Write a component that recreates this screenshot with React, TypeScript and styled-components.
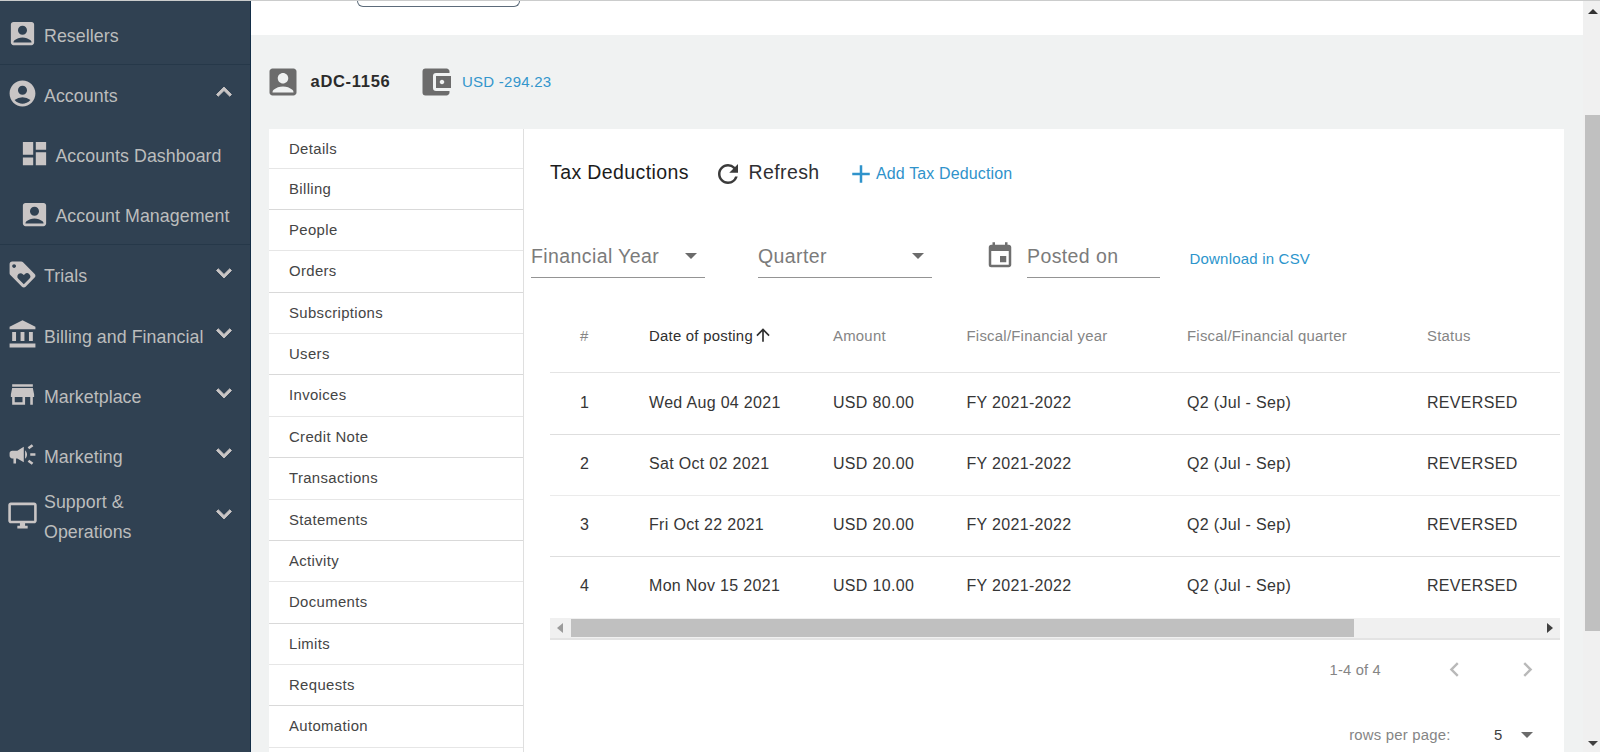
import React from 'react';
import styled, { createGlobalStyle } from 'styled-components';
import {
  MdAccountBalance,
  MdAccountBalanceWallet,
  MdAccountBox,
  MdAccountCircle,
  MdAdd,
  MdArrowUpward,
  MdCampaign,
  MdChevronLeft,
  MdChevronRight,
  MdDashboard,
  MdEvent,
  MdExpandLess,
  MdExpandMore,
  MdLoyalty,
  MdOutlineDesktopWindows,
  MdRefresh,
  MdStore,
} from 'react-icons/md';

const menus = [
  { label: 'Resellers', icon: MdAccountBox, divider: true },
  { label: 'Accounts', icon: MdAccountCircle, toggle: 'up' },
  { label: 'Accounts Dashboard', icon: MdDashboard, sub: true },
  { label: 'Account Management', icon: MdAccountBox, sub: true, divider: true },
  { label: 'Trials', icon: MdLoyalty, toggle: 'down' },
  { label: 'Billing and Financial', icon: MdAccountBalance, toggle: 'down' },
  { label: 'Marketplace', icon: MdStore, toggle: 'down' },
  { label: 'Marketing', icon: MdCampaign, toggle: 'down' },
  { label: 'Support & Operations', icon: MdOutlineDesktopWindows, toggle: 'down' },
];

const tabs = [
  'Details',
  'Billing',
  'People',
  'Orders',
  'Subscriptions',
  'Users',
  'Invoices',
  'Credit Note',
  'Transactions',
  'Statements',
  'Activity',
  'Documents',
  'Limits',
  'Requests',
  'Automation',
];

const deductions = [
  { id: 1, date: 'Wed Aug 04 2021', amount: 'USD 80.00' },
  { id: 2, date: 'Sat Oct 02 2021', amount: 'USD 20.00' },
  { id: 3, date: 'Fri Oct 22 2021', amount: 'USD 20.00' },
  { id: 4, date: 'Mon Nov 15 2021', amount: 'USD 10.00' },
];

export default function App() {
  return (
    <>
      <GlobalStyle />
      <Page>
        <Sidebar>
          {menus.map(({ label, icon: Icon, sub, toggle, divider }) => (
            <MenuItem key={label} $sub={sub} $divider={divider}>
              <Icon size={31} />
              <MenuLabel>{label}</MenuLabel>
              {toggle && (
                <Toggle>
                  {toggle === 'up' ? <MdExpandLess size={30} /> : <MdExpandMore size={30} />}
                </Toggle>
              )}
            </MenuItem>
          ))}
        </Sidebar>

        <Content>
          <TopBar>
            <SearchBox />
          </TopBar>
          <AccountBar>
            <MdAccountBox size={36} />
            <AccountName>aDC-1156</AccountName>
            <MdAccountBalanceWallet size={36} />
            <Balance>USD -294.23</Balance>
          </AccountBar>

          <Panel>
            <TabList>
              {tabs.map((tab) => (
                <Tab key={tab}>{tab}</Tab>
              ))}
            </TabList>

            <Detail>
              <TitleRow>
                <Title>Tax Deductions</Title>
                <RefreshButton>
                  <MdRefresh size={30} />
                  <span>Refresh</span>
                </RefreshButton>
                <AddButton>
                  <MdAdd size={30} />
                  <span>Add Tax Deduction</span>
                </AddButton>
              </TitleRow>

              <FilterRow>
                <Select>
                  Financial Year
                  <Caret />
                </Select>
                <Select>
                  Quarter
                  <Caret />
                </Select>
                <MdEvent size={30} />
                <DateField>Posted on</DateField>
                <Download>Download in CSV</Download>
              </FilterRow>

              <Table>
                <HeadRow>
                  <span>#</span>
                  <Sorted>
                    Date of posting
                    <MdArrowUpward size={20} />
                  </Sorted>
                  <span>Amount</span>
                  <span>Fiscal/Financial year</span>
                  <span>Fiscal/Financial quarter</span>
                  <span>Status</span>
                </HeadRow>
                {deductions.map(({ id, date, amount }) => (
                  <Row key={id}>
                    <span>{id}</span>
                    <span>{date}</span>
                    <span>{amount}</span>
                    <span>FY 2021-2022</span>
                    <span>Q2 (Jul - Sep)</span>
                    <span>REVERSED</span>
                  </Row>
                ))}
                <ScrollX>
                  <ArrowLeft />
                  <ThumbX />
                  <ArrowRight />
                </ScrollX>
              </Table>

              <Pager>
                <PageRange>1-4 of 4</PageRange>
                <MdChevronLeft size={29} />
                <MdChevronRight size={29} />
              </Pager>
              <PageSize>
                rows per page:
                <Size>5</Size>
                <Caret />
              </PageSize>
            </Detail>
          </Panel>
        </Content>

        <ScrollY>
          <ArrowUp />
          <ThumbY />
          <ArrowDown />
        </ScrollY>
      </Page>
    </>
  );
}

const GlobalStyle = createGlobalStyle`
  * {
    box-sizing: border-box;
  }

  body {
    margin: 0;
    overflow: hidden;
    font-family: 'Liberation Sans', Arial, sans-serif;
  }

  svg {
    flex-shrink: 0;
  }
`;

const Page = styled.div`
  display: grid;
  grid-template-columns: 251px 1fr 17px;
  height: 752px;
  overflow: hidden;
  border-top: 1px solid #cbcccc;
  background: #f0f2f2;
`;

const Sidebar = styled.nav`
  padding-top: 3.5px;
  background: #304152;
  border-right: 1px solid #142e47;
`;

const MenuItem = styled.div<{ $sub?: boolean; $divider?: boolean }>`
  display: flex;
  align-items: center;
  height: 60.2px;
  padding: 0 11px 0 ${({ $sub }) => ($sub ? 18.7 : 7.3)}px;
  border-bottom: 1px solid ${({ $divider }) => ($divider ? '#263849' : 'transparent')};
  color: #c9c5c5;

  > svg {
    margin-bottom: 1px;
  }
`;

const MenuLabel = styled.span`
  flex: 1;
  padding-top: 3px;
  margin-left: 5.7px;
  font-size: 17.8px;
  line-height: 30px;
  letter-spacing: 0.06px;
  color: #bcbdbd;
`;

const Toggle = styled.span`
  display: flex;
  margin-bottom: 4px;

  path:last-child {
    stroke: currentColor;
    stroke-width: 0.7px;
  }
`;

const Content = styled.main`
  min-width: 0;
  height: 751px;
  overflow: hidden;
`;

const TopBar = styled.div`
  height: 34px;
  padding-left: 106px;
  background: #fff;
`;

const SearchBox = styled.div`
  width: 163px;
  height: 6px;
  border: 1px solid #5c6b7a;
  border-top: 0;
  border-radius: 0 0 6px 6px;
`;

const AccountBar = styled.div`
  display: flex;
  align-items: center;
  height: 93.6px;
  padding-left: 13.5px;
  color: #6c6c6c;
`;

const AccountName = styled.strong`
  width: 117px;
  padding-left: 10px;
  font-size: 16.5px;
  letter-spacing: 0.7px;
  color: #2b2b2b;
`;

const Balance = styled.span`
  margin-left: 8.5px;
  font-size: 15px;
  letter-spacing: 0.25px;
  color: #3396cc;
`;

const Panel = styled.section`
  display: flex;
  width: 1295px;
  height: 640px;
  margin-left: 18px;
  background: #fff;
`;

const TabList = styled.ul`
  width: 255px;
  margin: 0;
  padding: 0;
  border-right: 1px solid #dfdfdf;
  list-style: none;
`;

const Tab = styled.li`
  height: 41.36px;
  padding-left: 20px;
  border-bottom: 1px solid #e6e6e6;
  font-size: 14.9px;
  line-height: 41.8px;
  letter-spacing: 0.36px;
  color: #454545;

  &:first-child {
    height: 40.1px;
    line-height: 40.6px;
  }

  &:nth-child(even) {
    border-color: #d9d9d9;
  }
`;

const Detail = styled.div`
  flex: 1;
  min-width: 0;
`;

const TitleRow = styled.div`
  display: flex;
  align-items: center;
  height: 30px;
  margin: 30.4px 0 0 26px;
`;

const Title = styled.h1`
  width: 162.5px;
  margin: -4px 0 0;
  font-size: 19.5px;
  font-weight: normal;
  line-height: 26px;
  letter-spacing: 0.4px;
  color: #1c1c1c;
`;

const RefreshButton = styled.div`
  display: flex;
  align-items: center;
  width: 133.5px;
  height: 30px;
  font-size: 19.5px;
  letter-spacing: 0.4px;
  color: #2f2f33;

  svg {
    color: #3b3b3b;
  }

  span {
    margin: -2px 0 0 6px;
  }
`;

const AddButton = styled.div`
  display: flex;
  align-items: center;
  font-size: 16px;
  letter-spacing: 0.13px;
  color: #2f93cb;

  span {
    padding-top: 1px;
  }
`;

const FilterRow = styled.div`
  display: flex;
  align-items: flex-start;
  height: 50px;
  margin: 52.4px 0 0 7px;
  color: #6f6f6f;

  > svg {
    margin: 0 12px 0 0;
  }
`;

const Field = styled.div`
  height: 37px;
  border-bottom: 1px solid #949494;
  font-size: 19.5px;
  line-height: 30px;
  letter-spacing: 0.4px;
  color: #7b7b7b;
`;

const Select = styled(Field)`
  display: flex;
  align-items: center;
  justify-content: space-between;
  width: 174px;
  margin-right: 53px;
  padding: 0 8.5px 6px 0;
`;

const Caret = styled.i`
  border: 6px solid transparent;
  border-top-color: #6b6b6b;
  border-bottom: 0;
`;

const DateField = styled(Field)`
  width: 133px;
`;

const Download = styled.span`
  margin-left: 29.5px;
  font-size: 15px;
  line-height: 35px;
  letter-spacing: 0.2px;
  color: #2c95cc;
`;

const Table = styled.div`
  width: 1010px;
  margin: 11px 0 0 26px;
`;

const Row = styled.div`
  display: grid;
  grid-template-columns: 69px 184px 133.5px 220.5px 240px 1fr;
  align-items: center;
  height: 61.3px;
  padding: 0 0 2px 30px;
  border-bottom: 1px solid #dedede;
  font-size: 16px;
  letter-spacing: 0.32px;
  color: #363636;
  white-space: nowrap;

  &:nth-child(4n + 3) {
    border-color: #ebebeb;
  }

  &:nth-child(5) {
    height: 60.3px;
    border: 0;
  }
`;

const HeadRow = styled(Row)`
  height: 71px;
  font-size: 14.9px;
  letter-spacing: 0.25px;
  border-color: #e4e4e4;
  color: #858585;
`;

const Sorted = styled.span`
  display: flex;
  align-items: center;
  color: #2f2f2f;

  svg {
    margin-bottom: 3px;
  }
`;

const ScrollX = styled.div`
  display: flex;
  align-items: center;
  height: 22px;
  border-bottom: 2px solid #e3e3e3;
  background: #f0f0f0;
`;

const ThumbX = styled.div`
  width: 783px;
  height: 18px;
  background: #c0c0c0;
`;

const ArrowLeft = styled.i`
  margin: 0 8px 0 7px;
  border: 5px solid transparent;
  border-left: 0;
  border-right: 6px solid #9b9b9b;
`;

const ArrowRight = styled.i`
  margin: 0 7px 0 auto;
  border: 5px solid transparent;
  border-right: 0;
  border-left: 6px solid #404040;
`;

const Pager = styled.div`
  display: flex;
  align-items: center;
  justify-content: flex-end;
  gap: 44.5px;
  height: 60px;
  padding-right: 22px;
  color: #b9b9b9;
`;

const PageRange = styled.span`
  margin-right: 14px;
  font-size: 14.7px;
  letter-spacing: 0.2px;
  color: #858585;
`;

const PageSize = styled.div`
  display: flex;
  align-items: center;
  justify-content: flex-end;
  height: 70px;
  padding-right: 31px;
  font-size: 14.9px;
  letter-spacing: 0.2px;
  color: #858585;
`;

const Size = styled.span`
  width: 27px;
  margin-left: 43.5px;
  color: #404040;
`;

const ScrollY = styled.div`
  display: flex;
  flex-direction: column;
  align-items: center;
  height: 751px;
  padding: 8px 0 6px;
  background: #f0f0f0;
`;

const ThumbY = styled.div`
  align-self: flex-end;
  width: 15px;
  height: 516px;
  margin: 101px 0 auto;
  background: #c0c0c0;
`;

const ArrowUp = styled.i`
  margin-left: 3px;
  border: 5px solid transparent;
  border-top: 0;
  border-bottom-color: #333;
`;

const ArrowDown = styled.i`
  margin-left: 3px;
  border: 5px solid transparent;
  border-bottom: 0;
  border-top-color: #404040;
`;
